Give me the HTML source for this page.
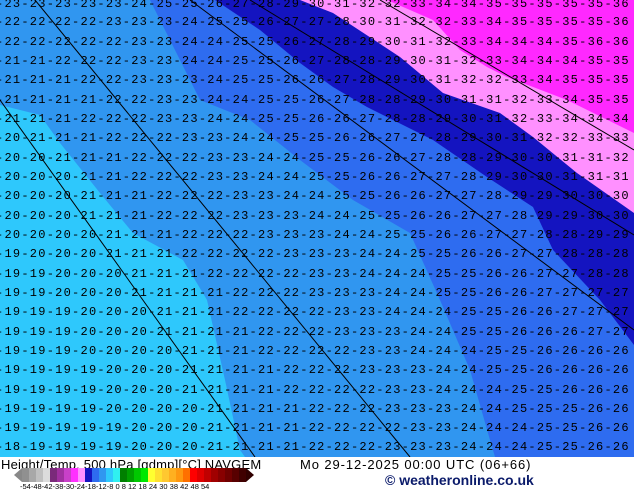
<!DOCTYPE html>
<html><head><style>
body{margin:0;width:634px;height:490px;overflow:hidden;background:#fff;position:relative;font-family:"Liberation Mono",monospace}
#map{position:absolute;left:0;top:0;width:634px;height:457px;overflow:hidden}
.r{position:absolute;left:-4px;white-space:pre;font-size:12px;letter-spacing:1.25px;color:#000;line-height:12px}
#bar{position:absolute;left:0;top:457px;width:634px;height:33px;background:#fff}
.t{position:absolute;font-family:"Liberation Sans",sans-serif;font-size:13px;color:#000;white-space:pre}
</style></head><body>
<div id="map">
<svg width="634" height="457" style="position:absolute;left:0;top:0">
<rect width="634" height="457" fill="#3096f0"/>
<polygon points="0,105 40,115 60,143 100,193 133,233 183,260 207,300 225,380 240,450 245,457 0,457" fill="#2ec8fc"/>
<polygon points="150,0 200,100 250,120 300,160 353,200 410,233 440,300 470,370 490,440 495,457 634,457 634,0" fill="#2e6cf0"/>
<polygon points="215,0 260,30 300,63 333,87 367,107 433,140 487,177 533,207 553,250 600,300 634,345 634,0" fill="#1414c0"/>
<polygon points="300,0 333,13 400,57 443,93 500,113 533,137 577,173 634,213 634,0" fill="#ff90ff"/>
<polygon points="387,0 433,20 460,50 487,67 507,77 567,100 634,133 634,0" fill="#ff28ff"/>
<g stroke="#000" stroke-width="1" fill="none">
<line x1="0" y1="100" x2="255" y2="457"/>
<line x1="35" y1="0" x2="410" y2="457"/>
<line x1="190" y1="0" x2="634" y2="330"/>
<line x1="250" y1="0" x2="634" y2="235"/>
<line x1="380" y1="0" x2="634" y2="150"/>
</g>
</svg>
<div class="r" style="top:-2px">-23-23-23-23-23-24-25-25-26-27-28-29-30-31-32-32-33-34-34-35-35-35-35-35-36</div>
<div class="r" style="top:16px">-22-22-22-22-23-23-23-24-25-25-26-27-27-28-30-31-32-32-33-34-35-35-35-35-36</div>
<div class="r" style="top:36px">-22-22-22-22-22-23-23-24-24-25-25-26-27-28-29-30-31-32-33-34-34-34-35-36-36</div>
<div class="r" style="top:55px">-21-21-22-22-22-23-23-24-24-25-25-26-27-28-28-29-30-31-32-33-34-34-34-35-35</div>
<div class="r" style="top:74px">-21-21-21-22-22-23-23-23-24-25-25-26-26-27-28-29-30-31-32-32-33-34-35-35-35</div>
<div class="r" style="top:94px">-21-21-21-21-22-22-23-23-24-24-25-25-26-27-28-28-29-30-31-31-32-33-34-35-35</div>
<div class="r" style="top:113px">-21-21-21-22-22-22-23-23-24-24-25-25-26-26-27-28-28-29-30-31-32-33-34-34-34</div>
<div class="r" style="top:132px">-20-21-21-21-22-22-22-23-23-24-24-25-25-26-26-27-27-28-29-30-31-32-32-33-33</div>
<div class="r" style="top:152px">-20-20-21-21-21-22-22-22-23-23-24-24-25-25-26-26-27-28-28-29-30-30-31-31-32</div>
<div class="r" style="top:171px">-20-20-20-21-21-22-22-22-23-23-24-24-25-25-26-26-27-27-28-29-30-30-31-31-31</div>
<div class="r" style="top:190px">-20-20-20-21-21-21-22-22-22-23-23-24-24-25-25-26-26-27-27-28-29-29-30-30-30</div>
<div class="r" style="top:210px">-20-20-20-21-21-21-22-22-22-23-23-23-24-24-25-25-26-26-27-27-28-29-29-30-30</div>
<div class="r" style="top:229px">-20-20-20-20-21-21-21-22-22-22-23-23-23-24-24-25-25-26-26-27-27-28-28-29-29</div>
<div class="r" style="top:248px">-19-20-20-20-21-21-21-22-22-22-22-23-23-23-24-24-25-25-26-26-27-27-28-28-28</div>
<div class="r" style="top:268px">-19-19-20-20-20-21-21-21-22-22-22-22-23-23-24-24-24-25-25-26-26-27-27-28-28</div>
<div class="r" style="top:287px">-19-19-20-20-20-21-21-21-21-22-22-22-23-23-23-24-24-25-25-26-26-27-27-27-27</div>
<div class="r" style="top:306px">-19-19-19-20-20-20-21-21-21-22-22-22-22-23-23-24-24-24-25-25-26-26-27-27-27</div>
<div class="r" style="top:326px">-19-19-19-20-20-20-21-21-21-21-22-22-22-23-23-23-24-24-25-25-26-26-26-27-27</div>
<div class="r" style="top:345px">-19-19-19-20-20-20-20-21-21-21-22-22-22-22-23-23-24-24-24-25-25-26-26-26-26</div>
<div class="r" style="top:364px">-19-19-19-19-20-20-20-21-21-21-21-22-22-22-23-23-23-24-24-25-25-26-26-26-26</div>
<div class="r" style="top:384px">-19-19-19-19-20-20-20-21-21-21-21-22-22-22-22-23-23-24-24-24-25-25-26-26-26</div>
<div class="r" style="top:403px">-19-19-19-19-20-20-20-20-21-21-21-21-22-22-22-23-23-23-24-24-25-25-25-26-26</div>
<div class="r" style="top:422px">-19-19-19-19-19-20-20-20-21-21-21-21-22-22-22-22-23-23-24-24-24-25-25-26-26</div>
<div class="r" style="top:441px">-18-19-19-19-19-20-20-20-21-21-21-21-22-22-22-23-23-23-24-24-24-25-25-26-26</div>
</div>
<div id="bar">
<div class="t" style="left:1px;top:0px;letter-spacing:0.2px">Height/Temp. 500 hPa [gdmp][°C] NAVGEM</div>
<div class="t" style="left:300px;top:0px;letter-spacing:0.9px">Mo 29-12-2025 00:00 UTC (06+66)</div>
<div class="t" style="left:385px;top:15px;color:#0a1a6a;font-weight:bold;font-size:14px">© weatheronline.co.uk</div>
<svg style="position:absolute;left:0;top:0" width="300" height="33">
<polygon points="14,18 22,11 22,25" fill="#888"/>
<g>
<rect x="22" y="11" width="7" height="14" fill="#909090"/>
<rect x="29" y="11" width="7" height="14" fill="#a8a8a8"/>
<rect x="36" y="11" width="7" height="14" fill="#c0c0c0"/>
<rect x="43" y="11" width="7" height="14" fill="#dcdcdc"/>
<rect x="50" y="11" width="7" height="14" fill="#7a2a7a"/>
<rect x="57" y="11" width="7" height="14" fill="#a030a0"/>
<rect x="64" y="11" width="7" height="14" fill="#c840c8"/>
<rect x="71" y="11" width="7" height="14" fill="#ff30ff"/>
<rect x="78" y="11" width="7" height="14" fill="#ff90ff"/>
<rect x="85" y="11" width="7" height="14" fill="#1414c0"/>
<rect x="92" y="11" width="7" height="14" fill="#2e6cf0"/>
<rect x="99" y="11" width="7" height="14" fill="#3096f0"/>
<rect x="106" y="11" width="7" height="14" fill="#2ec8fc"/>
<rect x="113" y="11" width="7" height="14" fill="#30f0f0"/>
<rect x="120" y="11" width="7" height="14" fill="#008000"/>
<rect x="127" y="11" width="7" height="14" fill="#00a000"/>
<rect x="134" y="11" width="7" height="14" fill="#00c800"/>
<rect x="141" y="11" width="7" height="14" fill="#00e800"/>
<rect x="148" y="11" width="7" height="14" fill="#ffff30"/>
<rect x="155" y="11" width="7" height="14" fill="#ffe030"/>
<rect x="162" y="11" width="7" height="14" fill="#ffc830"/>
<rect x="169" y="11" width="7" height="14" fill="#ffb020"/>
<rect x="176" y="11" width="7" height="14" fill="#ff9810"/>
<rect x="183" y="11" width="7" height="14" fill="#ff7000"/>
<rect x="190" y="11" width="7" height="14" fill="#ff0000"/>
<rect x="197" y="11" width="7" height="14" fill="#e00000"/>
<rect x="204" y="11" width="7" height="14" fill="#c00000"/>
<rect x="211" y="11" width="7" height="14" fill="#a00000"/>
<rect x="218" y="11" width="7" height="14" fill="#880000"/>
<rect x="225" y="11" width="7" height="14" fill="#700000"/>
<rect x="232" y="11" width="7" height="14" fill="#580000"/>
<rect x="239" y="11" width="7" height="14" fill="#400000"/>
</g>
<polygon points="246,11 254,18 246,25" fill="#300000"/>
<text x="20" y="32" font-family="Liberation Sans" font-size="7.5" fill="#000">-54-48-42-38-30-24-18-12-8   0   8   12  18  24  30  38  42  48  54</text>
</svg>
</div>
</body></html>
